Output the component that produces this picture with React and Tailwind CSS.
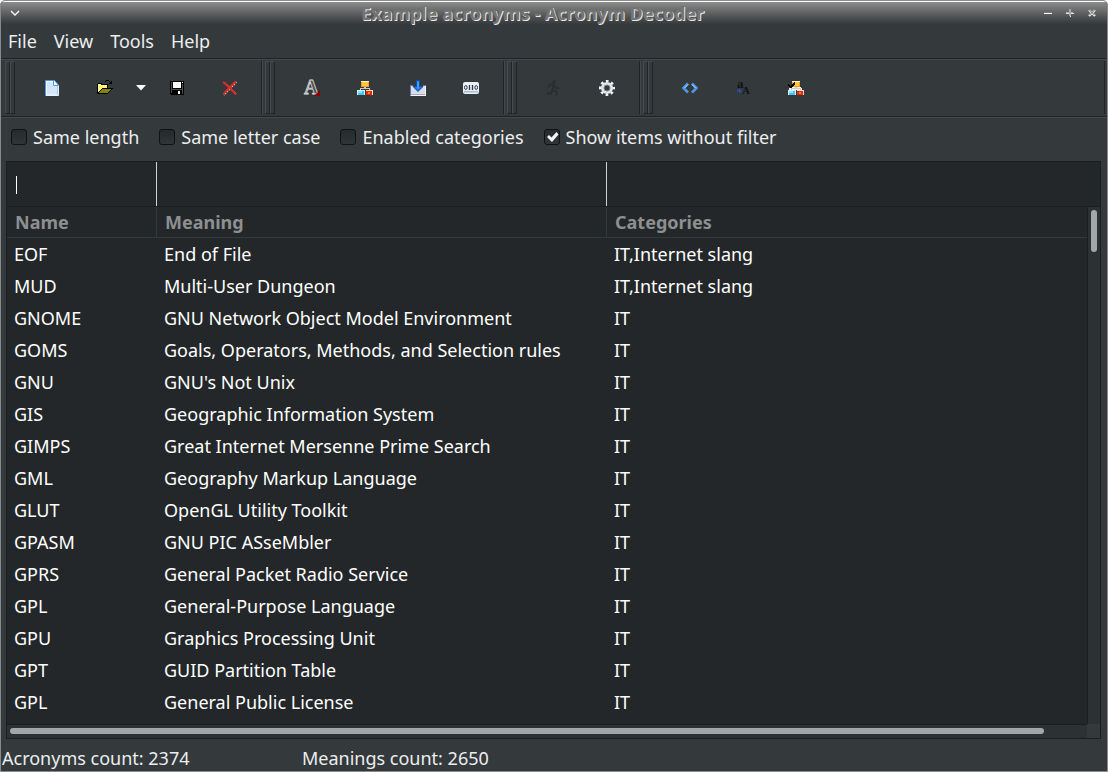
import React, { useState } from 'react';

const ROWS = [
  ['EOF', 'End of File', 'IT,Internet slang'],
  ['MUD', 'Multi-User Dungeon', 'IT,Internet slang'],
  ['GNOME', 'GNU Network Object Model Environment', 'IT'],
  ['GOMS', 'Goals, Operators, Methods, and Selection rules', 'IT'],
  ['GNU', "GNU's Not Unix", 'IT'],
  ['GIS', 'Geographic Information System', 'IT'],
  ['GIMPS', 'Great Internet Mersenne Prime Search', 'IT'],
  ['GML', 'Geography Markup Language', 'IT'],
  ['GLUT', 'OpenGL Utility Toolkit', 'IT'],
  ['GPASM', 'GNU PIC ASseMbler', 'IT'],
  ['GPRS', 'General Packet Radio Service', 'IT'],
  ['GPL', 'General-Purpose Language', 'IT'],
  ['GPU', 'Graphics Processing Unit', 'IT'],
  ['GPT', 'GUID Partition Table', 'IT'],
  ['GPL', 'General Public License', 'IT'],
];

const Icon = ({ children, crisp }) => (
  <svg width="16" height="16" viewBox="0 0 16 16" fill="none" overflow="visible" shapeRendering={crisp ? 'crispEdges' : 'auto'} aria-hidden="true">
    {children}
  </svg>
);

const NewIcon = () => (
  <Icon>
    <path d="M1.500 .500h9l3.500 4v11h-12.500z" fill="#f4f9ff" stroke="#4f98e6" />
    <path d="M3 2h6.500v4h3.500v8.500h-10z" fill="#d3e6fb" />
    <path d="M9.500 1v4.500h4.500" stroke="#4f98e6" />
    <path d="M10.500 2.500v2h2z" fill="#fff" />
    <path d="M2 15.500h12.500v-10" stroke="#e8f2ff" />
  </Icon>
);

const OpenIcon = () => (
  <Icon crisp>
    <path d="M0 4h1v-1h4v1h6v4h-1v-3h-6v-1h-3v10h-1z" fill="#000" />
    <path d="M1 4h3v1h6v3h-5v1h-1v1h-1v1h-1v2h-1z" fill="#fff46b" />
    <path d="M2 5h1v1h-1zM4 6h1v1h-1zM6 5h1v1h-1zM8 6h1v1h-1zM2 8h1v1h-1zM1 10h1v1h-1z" fill="#fff" />
    <path d="M5 8h11v1h-1v1h-1v1h-1v1h-1v1h-1v1h-11v-1h1v-1h1v-1h1v-1h1v-1h1z" fill="#000" />
    <path d="M5 9h9v1h-1v1h-1v1h-1v1h-9v-1h1v-1h1v-1h1z" fill="#858300" />
    <path d="M8 1h1v-1h3v1h-3v1h-1zM12 1h1v1h1v-1h1v3h-3v-1h1v-1h-1z" fill="#000" />
  </Icon>
);

const SaveIcon = () => (
  <Icon crisp>
    <path d="M1 1h14v14h-13v-1h-1z" fill="#000" />
    <path d="M4 2h8v6h-8z" fill="#fff" />
    <path d="M2 2h1v11h-1zM13 4h1v10h-1zM3 9h10v1h-10z" fill="#4a4d4f" />
    <path d="M13 2h1v1h-1z" fill="#fff" />
    <path d="M4 11h8v3h-8z" fill="#000" />
    <path d="M9 11h2v3h-2z" fill="#fff" />
  </Icon>
);

const DeleteIcon = () => (
  <Icon>
    <path d="M2 2.500l12.500 12M14.500 2l-12.500 13" stroke="#e9c4c4" strokeWidth="1.500" strokeDasharray="1.500 1" />
    <path d="M1 2l5 4l8 8.500M13.500 1.500l-5 5l-7 7.500" stroke="#e12626" strokeWidth="1.900" />
  </Icon>
);

const FontIcon = () => (
  <Icon>
    <text x="0" y="14" fontFamily="Liberation Serif, serif" fontSize="20" fontWeight="bold" fill="#4c4f51" stroke="#dcdcdc" strokeWidth=".8">A</text>
    <path d="M16 10v6h-6z" fill="#8c0000" />
  </Icon>
);

const Categories = () => (
  <>
    <path d="M7 7h2v1h4v2h-1v-1h-8v1h-1v-2h4z" fill="#c9cdd0" />
    <path d="M4 1h8v6h-8z" fill="#fff0cf" />
    <path d="M4 2h8v5h-8z" fill="#ff9a1a" />
    <path d="M5 2h6v4h-6z" fill="#ffc83d" />
    <path d="M0 10h8v5h-8z" fill="#d8f4ff" />
    <path d="M1 11h6v4h-6z" fill="#45c4f7" />
    <path d="M1 11h4v2h-4z" fill="#8ee1ff" />
    <path d="M9 10h7v5h-7z" fill="#ffd9bf" />
    <path d="M9 11h6v4h-6z" fill="#e52a0c" />
    <path d="M11 12h2v2h-2z" fill="#ff7a2a" />
  </>
);

const CategoriesIcon = () => <Icon crisp><Categories /></Icon>;

const CategoryCheckIcon = () => (
  <Icon crisp>
    <path d="M2 7h11v1h1v2h-13v-2h1z" fill="#f3f4f4" />
    <Categories />
    <path d="M0 4h1v1h1v1h1v-1h1v-1h1v-1h1v-1h1v3h-1v1h-1v1h-1v1h-2v-1h-1v-1h-1z" fill="#000" />
  </Icon>
);

const ImportIcon = () => (
  <Icon>
    <path d="M.500 5.500h15v9.500h-15z" fill="#dcdce4" stroke="#6a70b8" />
    <path d="M.500 15.500h15.500M15.500 6v10" stroke="#f4f4fa" />
    <path d="M3 5h10v1.500l-5 5l-5-5z" fill="#34393c" />
    <path d="M6.500 .500h3v6h3.500l-5 5l-5-5h3.500z" fill="#1d78e6" stroke="#0a4ca8" strokeWidth=".8" />
    <path d="M8 1.500v7" stroke="#65c4ff" />
  </Icon>
);

const BinaryIcon = () => (
  <Icon>
    <rect x="0" y="2" width="16" height="12" rx="2" fill="#e9f0fa" />
    <path d="M1 11h14v1.500h-14z" fill="#a9bbd6" />
    <ellipse cx="2.800" cy="7.500" rx="1.300" ry="2" stroke="#33383e" />
    <path d="M6.500 5v5M9.500 5v5" stroke="#33383e" strokeWidth="1.300" />
    <ellipse cx="13.200" cy="7.500" rx="1.300" ry="2" stroke="#33383e" />
  </Icon>
);

const RunIcon = () => (
  <Icon>
    <circle cx="8" cy="2" r="1.800" fill="#292d2f" />
    <path d="M7.500 4.500h-3.500l-2 3M7.500 4.500l-1 5.500l4 1.500v4M6.500 10l-1.500 3.500h-4M8 5l2 3h3" stroke="#292d2f" strokeWidth="1.800" />
  </Icon>
);

const GearIcon = () => (
  <Icon>
    <circle cx="8" cy="8" r="6.700" stroke="#f1f4f7" strokeWidth="2.600" strokeDasharray="2.660 2.602" strokeDashoffset="1.330" />
    <circle cx="8" cy="8" r="4.600" stroke="#dfe4ea" strokeWidth="3" />
    <circle cx="8" cy="8" r="3" stroke="#7d858e" />
  </Icon>
);

const ArrowsIcon = () => (
  <Icon>
    <path d="M6 3.500l-4.500 4.500l4.500 4.500M10 3.500l4.500 4.500l-4.500 4.500" stroke="#4f97e2" strokeWidth="2.600" />
    <path d="M6 4.500l-3.500 3.500M10 4.500l3.500 3.500" stroke="#b5daff" />
  </Icon>
);

const LetterCaseIcon = () => (
  <Icon>
    <text x="2" y="8" fontFamily="Liberation Serif, serif" fontSize="13" fontWeight="bold" fill="#111315">a</text>
    <text x="7" y="14" fontFamily="Liberation Serif, serif" fontSize="11" fontWeight="bold" fill="#111315">A</text>
    <path d="M2.500 9.500v1.500h2M4.500 9v4l2-2z" stroke="#2f50c8" />
  </Icon>
);

const CaretIcon = () => (
  <svg width="10" height="6" viewBox="0 0 10 6" aria-hidden="true"><path d="M0 0h10l-5 5.500z" fill="#fff" /></svg>
);

const TOOL_GROUPS = [
  [
    ['New', NewIcon],
    ['Open', OpenIcon],
    ['Open recent', CaretIcon, true],
    ['Save', SaveIcon],
    ['Delete', DeleteIcon],
  ],
  [
    ['Font', FontIcon],
    ['Categories', CategoriesIcon],
    ['Import', ImportIcon],
    ['Encoding', BinaryIcon],
  ],
  [
    ['Run', RunIcon],
    ['Settings', GearIcon],
  ],
  [
    ['Same length', ArrowsIcon],
    ['Same letter case', LetterCaseIcon],
    ['Enabled categories', CategoryCheckIcon],
  ],
];

const Grip = () => (
  <span className="flex h-[53px] w-[10px] shrink-0">
    <span className="flex-1 border border-t-[#454b4e] border-r-[#202426] border-b-[#202426] border-l-[#454b4e]" />
    <span className="flex-1 border border-t-[#454b4e] border-r-[#202426] border-b-[#202426] border-l-[#454b4e]" />
  </span>
);

const ToolGroup = ({ tools, first, last }) => (
  <div className={`flex items-center ${first ? 'pl-1 pr-[5px]' : 'pl-0.5 pr-1.5'} ${last ? 'flex-1 border-r border-[#202426]' : ''}`}>
    <Grip />
    <div className="ml-[10px] flex">
      {tools.map(([label, Glyph, narrow]) => (
        <button
          key={label}
          type="button"
          aria-label={label}
          className={`flex h-[53px] items-center justify-center ${narrow ? 'w-[19px]' : 'w-[53px]'}`}
        >
          <Glyph />
        </button>
      ))}
    </div>
  </div>
);

const FILTERS = [
  ['length', 'Same length'],
  ['letterCase', 'Same letter case'],
  ['categories', 'Enabled categories'],
  ['unfiltered', 'Show items without filter'],
];

const TitleBar = () => (
  <header className="flex h-[22px] items-center bg-linear-to-b from-[#8c8c8c] to-[#363a3c] text-white">
    <button type="button" aria-label="Window menu" className="flex h-full w-[27px] items-center justify-center">
      <svg width="10" height="8" viewBox="0 0 10 8" fill="none">
        <path d="M1 2l4 4l4-4" stroke="#f5f5f5" strokeWidth="1.500" />
        <path d="M2 1.500h6l-3 3z" fill="#666" />
      </svg>
    </button>
    <h1 className="flex-1 text-center text-[18px] leading-[22px] font-bold text-[#747474] [text-shadow:1px_1px_0_#e8e8e8]">
      Example acronyms - Acronym Decoder
    </h1>
    <div className="flex h-full pr-1">
      <button type="button" aria-label="Minimize" className="flex w-[22px] items-center justify-center">
        <svg width="8" height="8" viewBox="0 0 8 8" shapeRendering="crispEdges">
          <path d="M0 3h8v1h-8z" fill="#777" />
          <path d="M0 4h8v1h-8z" fill="#fff" />
        </svg>
      </button>
      <button type="button" aria-label="Maximize" className="flex w-[22px] items-center justify-center">
        <svg width="8" height="8" viewBox="0 0 8 8" shapeRendering="crispEdges">
          <path d="M0 4h8v1h-8zM4 0h1v8h-1z" fill="#e8e8e8" />
          <path d="M0 3h7v1h-7zM3 0h2v7h-2z" fill="#aaa" />
        </svg>
      </button>
      <button type="button" aria-label="Close" className="flex w-[22px] items-center justify-center">
        <svg width="8" height="8" viewBox="0 0 8 8" fill="none">
          <path d="M1 1l6 6M7 1l-6 6" stroke="#e6e6e6" strokeWidth="2.400" />
          <path d="M.500 0l6 6M7.500 0l-6 6" stroke="#6a6a6a" strokeWidth="1" />
        </svg>
      </button>
    </div>
  </header>
);

export default function App() {
  const [checked, setChecked] = useState({ unfiltered: true });
  const toggle = (key) => setChecked(prev => ({ ...prev, [key]: !prev[key] }));

  return (
    <div className="bg-white">
      <div className="flex min-h-screen flex-col overflow-hidden rounded-t-[5px] border border-[#8a8a8a] bg-[#34393c] font-['Noto_Sans',sans-serif] text-[18px] leading-6 text-[#eceeef]">
        <div className="h-px bg-white" />
        <TitleBar />

        {/* Menu */}
        <nav className="flex h-[34px] items-center gap-[17px] px-[7px]">
          {['File', 'View', 'Tools', 'Help'].map(name => (
            <button key={name} type="button">{name}</button>
          ))}
        </nav>

        {/* Toolbar */}
        <div className="flex border-y border-[#202426] shadow-[inset_0_1px_0_#42484b,0_1px_0_#42484b]">
          {TOOL_GROUPS.map((tools, i) => (
            <React.Fragment key={i}>
              {i > 0 && <span className="my-0.5 w-0.5 border-l border-[#202426] bg-[#42484b]" />}
              <div className={`flex py-0.5 ${i === TOOL_GROUPS.length - 1 ? 'flex-1 pr-0.5' : ''}`}>
                <ToolGroup tools={tools} first={i === 0} last={i === TOOL_GROUPS.length - 1} />
              </div>
            </React.Fragment>
          ))}
        </div>

        {/* Filter options */}
        <div className="flex h-11 items-center gap-5 px-[10px] pb-1">
          {FILTERS.map(([key, label]) => (
            <label key={key} className="flex items-center gap-1.5">
              <span className="relative flex">
                <input
                  type="checkbox"
                  checked={!!checked[key]}
                  onChange={() => toggle(key)}
                  className="h-4 w-4 appearance-none rounded-[3px] border border-[#101213] bg-linear-to-b from-[#262a2c] to-[#303538]"
                />
                {checked[key] && (
                  <svg className="pointer-events-none absolute inset-0" width="16" height="16" viewBox="0 0 16 16">
                    <path d="M3 8l2-2l2.500 2.500l5-5.500l2 2.500l-6.500 7.500z" fill="#f4f4f4" />
                  </svg>
                )}
              </span>
              {label}
            </label>
          ))}
        </div>

        {/* Acronym list */}
        <main className="mx-[5px] mr-1.5 flex flex-1 flex-col border border-[#1b1e20] bg-[#232729]">
          <div className="grid h-[45px] grid-cols-[150px_450px_1fr] border-b border-[#1b1e20]">
            <div className="relative border-r border-[#d0d0d0]">
              <input aria-label="Filter by name" className="h-full w-full bg-transparent px-2 caret-transparent outline-none" />
              <span className="pointer-events-none absolute top-3.5 left-[9px] h-[18px] w-px bg-white" />
            </div>
            <input aria-label="Filter by meaning" className="w-full border-r border-[#d0d0d0] bg-transparent px-2 outline-none" />
            <input aria-label="Filter by categories" className="w-full bg-transparent px-2 outline-none" />
          </div>

          <div className="flex flex-1">
            <div className="flex-1 pb-1.5">
              <table className="w-full table-fixed border-separate border-spacing-0 text-left">
                <colgroup>
                  <col className="w-[150px]" />
                  <col className="w-[450px]" />
                  <col />
                </colgroup>
                <thead className="text-[#8d8f90]">
                  <tr className="h-[31px]">
                    <th className="border-r border-b border-[#34393c] py-0 pl-2 font-bold">Name</th>
                    <th className="border-r border-b border-[#34393c] py-0 pl-2 font-bold">Meaning</th>
                    <th className="border-b border-[#34393c] py-0 pl-2 font-bold">Categories</th>
                  </tr>
                </thead>
                <tbody className="text-white">
                  {ROWS.map(([name, meaning, categories], i) => (
                    <tr key={i} className="h-8">
                      <td className="py-0 pl-[7px]">{name}</td>
                      <td className="py-0 pl-[7px]">{meaning}</td>
                      <td className="py-0 pl-[7px]">{categories}</td>
                    </tr>
                  ))}
                </tbody>
              </table>
            </div>
            <div className="w-[13px] border-l border-[#1b1e20] bg-[#2c3133] px-[3px] pt-[3px]">
              <div className="h-[42px] rounded-full bg-[#a5a7a7]" />
            </div>
          </div>

          <div className="flex h-[14px]">
            <div className="flex-1 border-t border-[#1b1e20] bg-[#2c3133] pt-[3px] pr-[43px] pl-[3px]">
              <div className="h-1.5 rounded-full bg-[#a5a7a7]" />
            </div>
            <div className="w-[13px] bg-[#34393c]" />
          </div>
        </main>

        {/* Status bar */}
        <footer className="flex h-8 items-center pt-1.5 pl-px">
          <span className="w-[300px]">Acronyms count: 2374</span>
          <span>Meanings count: 2650</span>
        </footer>
      </div>
    </div>
  );
}
